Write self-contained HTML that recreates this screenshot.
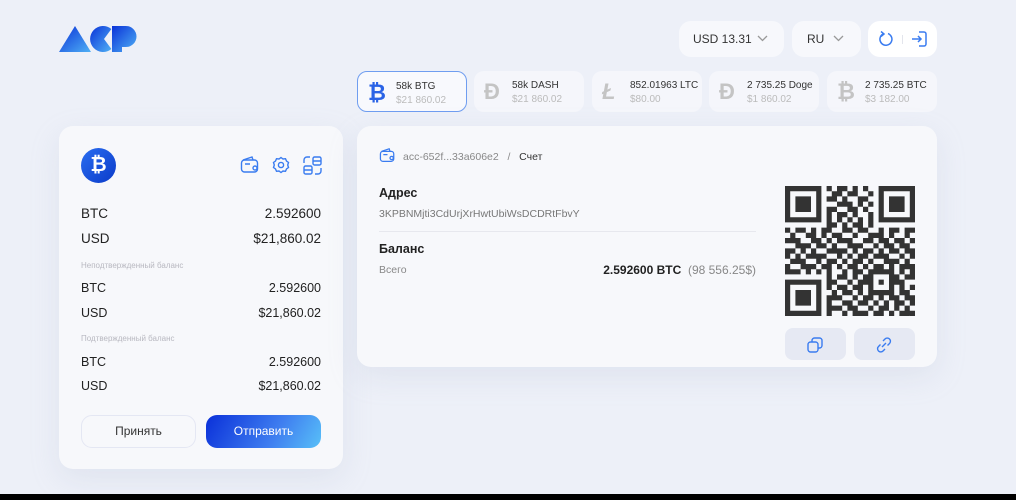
<!DOCTYPE html>
<html><head><meta charset="utf-8">
<style>
*{margin:0;padding:0;box-sizing:border-box}
body{width:1016px;height:500px;overflow:hidden;background:#edf0f8;font-family:"Liberation Sans",sans-serif;position:relative;color:#222}
.abs{position:absolute}
.pill{position:absolute;background:#f7f8fc;border-radius:12px}
.card{position:absolute;background:#f7f8fb;border-radius:14px;box-shadow:0 10px 30px rgba(160,170,200,.18)}
.coin{position:absolute;top:71px;height:41px;width:110px;background:#f5f6fb;border-radius:10px}
.coin .t{position:absolute;left:38px;top:9px;font-size:10px;color:#333}
.coin .s{position:absolute;left:38px;top:23px;font-size:10px;color:#bbb}
.coin .i{position:absolute;left:10px;top:8px;font-size:22px;font-weight:bold;color:#c4c4c4}
.row{position:absolute;left:22px;right:22px;font-size:13px;color:#222}
.row span{float:right}
.lbl{position:absolute;left:22px;font-size:8px;color:#b8b8c0}
</style></head><body>
<svg class="abs" style="left:59px;top:25px" width="80" height="28" viewBox="0 0 80 28">
<defs><linearGradient id="lg" x1="0" y1="0" x2="1" y2="1"><stop offset="0" stop-color="#0a32d8"/><stop offset="1" stop-color="#4fb0f5"/></linearGradient></defs>
<path d="M0 27 L16 1 L32 27Z" fill="url(#lg)"/>
<path d="M52.4 4 A13 13 0 1 0 52.4 24 L45 14Z" fill="url(#lg)"/>
<path d="M53 1 H67 A10.5 10.5 0 0 1 67 22 H63 V27 H53Z" fill="url(#lg)"/>
</svg>
<div class="pill" style="left:679px;top:21px;width:105px;height:36px"><span class="abs" style="left:14px;top:11px;font-size:12px;color:#333">USD 13.31</span><svg class="abs" style="left:78px;top:14px" width="11" height="7"><path d="M1 1l4.5 4.5L10 1" stroke="#999" fill="none" stroke-width="1.3"/></svg></div>
<div class="pill" style="left:792px;top:21px;width:69px;height:36px"><span class="abs" style="left:15px;top:11px;font-size:12px;color:#333">RU</span><svg class="abs" style="left:41px;top:14px" width="11" height="7"><path d="M1 1l4.5 4.5L10 1" stroke="#999" fill="none" stroke-width="1.3"/></svg></div>
<div class="pill" style="left:868px;top:21px;width:69px;height:36px;background:#fff">
<svg class="abs" style="left:10px;top:9px" width="16" height="18" viewBox="0 0 16 18"><path d="M5 4 A6 6 0 1 0 10 3.6" stroke="#3a7cf0" fill="none" stroke-width="1.5"/><path d="M3 1.5 L6 4 L3 6.5" stroke="#3a7cf0" fill="none" stroke-width="1.5"/></svg>
<div class="abs" style="left:34px;top:14px;width:1px;height:9px;background:#e3e5ec"></div>
<svg class="abs" style="left:43px;top:9px" width="17" height="18" viewBox="0 0 17 18"><path d="M8 2h5a2 2 0 0 1 2 2v10a2 2 0 0 1-2 2H8" stroke="#3a7cf0" fill="none" stroke-width="1.5"/><path d="M1 9h9M7 6l3 3-3 3" stroke="#3a7cf0" fill="none" stroke-width="1.5"/></svg>
</div>
<div class="coin" style="left:357px;background:#f8f9fd;border:1px solid #6f9df0">
<div class="i" style="color:#2a63e6;left:10px">₿</div><div class="t">58k BTG</div><div class="s">$21 860.02</div></div>
<div class="coin" style="left:474px"><div class="i">Đ</div><div class="t">58k DASH</div><div class="s">$21 860.02</div></div>
<div class="coin" style="left:592px"><div class="i" style="font-style:italic">Ł</div><div class="t">852.01963 LTC</div><div class="s">$80.00</div></div>
<div class="coin" style="left:709px"><div class="i">Đ</div><div class="t">2 735.25 Doge</div><div class="s">$1 860.02</div></div>
<div class="coin" style="left:827px"><div class="i">₿</div><div class="t">2 735.25 BTC</div><div class="s">$3 182.00</div></div>
<div class="card" style="left:59px;top:126px;width:284px;height:343px">
<div class="abs" style="left:22px;top:22px;width:35px;height:35px;border-radius:50%;background:linear-gradient(135deg,#2a6df0,#0b3bc9);color:#fff;font-weight:bold;font-size:20px;text-align:center;line-height:35px">₿</div>
<svg class="abs" style="left:181px;top:30px" width="20" height="18" viewBox="0 0 20 18"><rect x="1.5" y="4" width="16" height="12" rx="3" stroke="#3a7cf0" fill="none" stroke-width="1.4"/><path d="M3 4l9-3 1 3M5 8h5" stroke="#3a7cf0" fill="none" stroke-width="1.4"/><circle cx="15" cy="12" r="2" stroke="#3a7cf0" fill="none" stroke-width="1.4"/></svg>
<svg class="abs" style="left:213px;top:30px" width="18" height="18" viewBox="0 0 18 18"><path d="M9 1.5l2 1.5 2.5-.3 1 2.3 2 1.5-.8 2.5.8 2.5-2 1.5-1 2.3-2.5-.3-2 1.5-2-1.5-2.5.3-1-2.3-2-1.5.8-2.5-.8-2.5 2-1.5 1-2.3 2.5.3z" stroke="#3a7cf0" fill="none" stroke-width="1.4"/><circle cx="9" cy="9" r="2.6" stroke="#3a7cf0" fill="none" stroke-width="1.4"/></svg>
<svg class="abs" style="left:244px;top:30px" width="19" height="19" viewBox="0 0 19 19"><rect x="10" y="1" width="8" height="8" rx="1.5" stroke="#3a7cf0" fill="none" stroke-width="1.4"/><rect x="1" y="10" width="8" height="8" rx="1.5" stroke="#3a7cf0" fill="none" stroke-width="1.4"/><path d="M1 7V4a3 3 0 0 1 3-3h3M18 12v3a3 3 0 0 1-3 3h-3M10 5h8M1 14h8" stroke="#3a7cf0" fill="none" stroke-width="1.4"/></svg>
<div class="row" style="top:80px;font-size:13.5px">BTC<span>2.592600</span></div>
<div class="row" style="top:105px;font-size:13.5px">USD<span>$21,860.02</span></div>
<div class="lbl" style="top:135px">Неподтвержденный баланс</div>
<div class="row" style="top:155px;font-size:12.5px">BTC<span>2.592600</span></div>
<div class="row" style="top:180px;font-size:12.5px">USD<span>$21,860.02</span></div>
<div class="lbl" style="top:208px">Подтвержденный баланс</div>
<div class="row" style="top:229px;font-size:12.5px">BTC<span>2.592600</span></div>
<div class="row" style="top:253px;font-size:12.5px">USD<span>$21,860.02</span></div>
<div class="abs" style="left:22px;top:289px;width:115px;height:33px;border:1px solid #e4e7f3;border-radius:11px;text-align:center;line-height:31px;font-size:12px;color:#333">Принять</div>
<div class="abs" style="left:147px;top:289px;width:115px;height:33px;border-radius:11px;background:linear-gradient(120deg,#0a30d9,#3f7ef0 60%,#58c0f8);text-align:center;line-height:33px;font-size:12px;color:#fff">Отправить</div>
</div>
<div class="card" style="left:357px;top:126px;width:580px;height:241px">
<svg class="abs" style="left:22px;top:22px" width="17" height="15" viewBox="0 0 20 18"><rect x="1.5" y="4" width="16" height="12" rx="3" stroke="#3a7cf0" fill="none" stroke-width="1.5"/><path d="M3 4l9-3 1 3M5 8h5" stroke="#3a7cf0" fill="none" stroke-width="1.5"/><circle cx="15" cy="12" r="2" stroke="#3a7cf0" fill="none" stroke-width="1.5"/></svg>
<div class="abs" style="left:46px;top:25px;font-size:10.5px;color:#888">acc-652f...33a606e2 &nbsp;&nbsp;/&nbsp;&nbsp; <span style="color:#333">Счет</span></div>
<div class="abs" style="left:22px;top:60px;font-size:12.5px;font-weight:bold;color:#222">Адрес</div>
<div class="abs" style="left:22px;top:82px;font-size:10.5px;color:#777">3KPBNMjti3CdUrjXrHwtUbiWsDCDRtFbvY</div>
<div class="abs" style="left:22px;top:105px;width:377px;height:1px;background:#e7e8ee"></div>
<div class="abs" style="left:22px;top:116px;font-size:12.5px;font-weight:bold;color:#222">Баланс</div>
<div class="abs" style="left:22px;top:138px;font-size:10.5px;color:#888">Всего</div>
<div class="abs" style="right:181px;top:137px;font-size:12px;color:#222"><b>2.592600 BTC</b> <span style="color:#888;font-size:12px">&nbsp;(98 556.25$)</span></div>
<svg id="qr" class="abs" style="left:428px;top:60px" width="130" height="130" viewBox="0 0 25 25"></svg>
<div class="abs" style="left:428px;top:202px;width:61px;height:32px;border-radius:8px;background:#e6e9f3"><svg class="abs" style="left:22px;top:9px" width="16" height="16" viewBox="0 0 16 16"><rect x="5" y="1" width="10" height="10" rx="2.5" stroke="#3a7cf0" fill="none" stroke-width="1.4"/><rect x="1" y="5" width="10" height="10" rx="2.5" stroke="#3a7cf0" fill="#e6e9f3" stroke-width="1.4"/></svg></div>
<div class="abs" style="left:497px;top:202px;width:61px;height:32px;border-radius:8px;background:#e6e9f3"><svg class="abs" style="left:22px;top:9px" width="16" height="16" viewBox="0 0 16 16"><path d="M7 4l2-2a3 3 0 0 1 4.5 4.5l-2 2M9 12l-2 2a3 3 0 0 1-4.5-4.5l2-2M6 10l4-4" stroke="#3a7cf0" fill="none" stroke-width="1.4"/></svg></div>
</div>
<div class="abs" style="left:0;top:494px;width:1016px;height:6px;background:#000"></div>
<script>
var rows=["1111111010110101001111111","1000001001101100101000001","1011101011010011001011101","1011101000111010101011101","1011101011001101001011101","1000001010110100101000001","1111111010101010101111111","0000000011010110100000000","1011010110011011001011011","0100110101100100111010010","1110011010111001101101101","0011101101001110010110110","1101010011110101101011011","1010111100101011011100101","0111001011010110100111010","1001110110101101011010111","1110101010010110111110101","0000000010110101100011011","1111111011001011101011100","1000001010110110100010101","1011101001011010111110110","1011101011100101101011011","1011101010011011010101101","1000001011101100101101010","1111111010010111011010111"];
var d="";for(var y=0;y<25;y++)for(var x=0;x<25;x++)if(rows[y][x]=="1")d+="M"+x+" "+y+"h1v1h-1z";
document.getElementById("qr").innerHTML='<path d="'+d+'" fill="#333"/>';
</script>
</body></html>
